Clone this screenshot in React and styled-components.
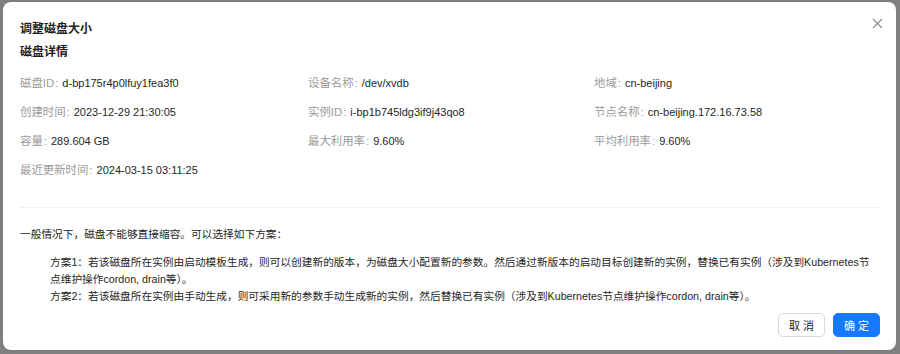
import React from "react";
import styled, { createGlobalStyle } from "styled-components";

const GlobalStyle = createGlobalStyle`
  html, body {
    margin: 0;
    padding: 0;
    background: #7f7f7f;
    font-family: "Liberation Sans", "Noto Sans CJK SC", sans-serif;
  }
`;

const Backdrop = styled.div`
  width: 900px;
  height: 354px;
  padding: 2px 4px 4px 3px;
  box-sizing: border-box;
  overflow: hidden;
`;

const Modal = styled.div`
  position: relative;
  height: 348px;
  box-sizing: border-box;
  background: #fff;
  border-radius: 8px;
  padding: 17px 16px 13px 17px;
  display: flex;
  flex-direction: column;
  color: #262626;
`;

const Title = styled.div`
  font-size: 12px;
  font-weight: 600;
  line-height: 20px;
  color: #1f1f1f;
`;

const SubTitle = styled.div`
  font-size: 12px;
  font-weight: 600;
  line-height: 20px;
  margin-top: 3px;
  color: #1f1f1f;
`;

const Close = styled.button`
  position: absolute;
  top: 15px;
  right: 13px;
  width: 12px;
  height: 12px;
  padding: 0;
  border: none;
  background: none;
  display: flex;
  align-items: center;
  justify-content: center;
  cursor: pointer;
`;

const InfoGrid = styled.div`
  margin-top: 12px;
  display: grid;
  grid-template-columns: 288px 286px 1fr;
  row-gap: 11px;
`;

const Item = styled.div`
  font-size: 11px;
  line-height: 18px;
  white-space: nowrap;
`;

const Label = styled.span`
  color: #9a9a9a;
  font-size: 11.4px;
  &::after {
    content: ":";
    margin: 0 4px 0 1px;
  }
`;

const Value = styled.span`
  color: #262626;
`;

const Divider = styled.div`
  height: 1px;
  background: #f0f0f0;
  margin-top: 28px;
`;

const Para = styled.p`
  margin: 18px 0 0;
  font-size: 10.7px;
  line-height: 17px;
  color: #262626;
`;

const Plans = styled.div`
  margin: 11px 0 0 30px;
  font-size: 10.7px;
  line-height: 17px;
  color: #262626;
`;

const Footer = styled.div`
  margin-top: auto;
  display: flex;
  justify-content: flex-end;
  gap: 8px;
`;

const Button = styled.button`
  width: 47px;
  height: 24px;
  border-radius: 5px;
  font-family: inherit;
  font-size: 11px;
  letter-spacing: 3px;
  text-indent: 3px;
  cursor: pointer;
  border: 1px solid ${(p) => (p.primary ? "#1677ff" : "#d9d9d9")};
  background: ${(p) => (p.primary ? "#1677ff" : "#fff")};
  color: ${(p) => (p.primary ? "#fff" : "#262626")};
  padding: 0;
`;

const info = [
  ["磁盘ID", "d-bp175r4p0lfuy1fea3f0"],
  ["设备名称", "/dev/xvdb"],
  ["地域", "cn-beijing"],
  ["创建时间", "2023-12-29 21:30:05"],
  ["实例ID", "i-bp1b745ldg3if9j43qo8"],
  ["节点名称", "cn-beijing.172.16.73.58"],
  ["容量", "289.604 GB"],
  ["最大利用率", "9.60%"],
  ["平均利用率", "9.60%"],
  ["最近更新时间", "2024-03-15 03:11:25"],
];

export default function App() {
  return (
    <>
      <GlobalStyle />
      <Backdrop>
        <Modal>
          <Title>调整磁盘大小</Title>
          <Close aria-label="close">
            <svg width="11" height="11" viewBox="0 0 11 11">
              <path d="M1 1L10 10M10 1L1 10" stroke="#8c8c8c" strokeWidth="1.1" />
            </svg>
          </Close>
          <SubTitle>磁盘详情</SubTitle>
          <InfoGrid>
            {info.map(([k, v]) => (
              <Item key={k}>
                <Label>{k}</Label>
                <Value>{v}</Value>
              </Item>
            ))}
          </InfoGrid>
          <Divider />
          <Para>一般情况下，磁盘不能够直接缩容。可以选择如下方案：</Para>
          <Plans>
            <div>
              方案1：若该磁盘所在实例由启动模板生成，则可以创建新的版本，为磁盘大小配置新的参数。然后通过新版本的启动目标创建新的实例，替换已有实例（涉及到Kubernetes节点维护操作cordon, drain等）。
            </div>
            <div>
              方案2：若该磁盘所在实例由手动生成，则可采用新的参数手动生成新的实例，然后替换已有实例（涉及到Kubernetes节点维护操作cordon, drain等）。
            </div>
          </Plans>
          <Footer>
            <Button>取消</Button>
            <Button primary>确定</Button>
          </Footer>
        </Modal>
      </Backdrop>
    </>
  );
}
